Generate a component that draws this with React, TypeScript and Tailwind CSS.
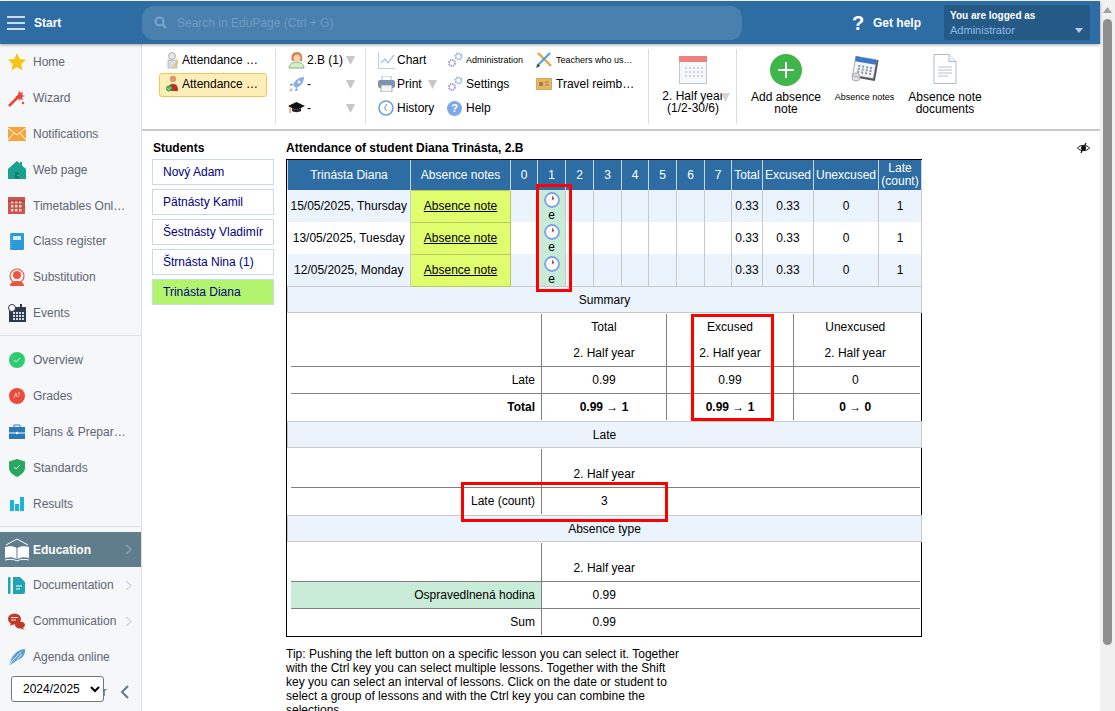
import React from "react";

const S = ({ w = 16, h = 16, vb = "0 0 16 16", children }: { w?: number; h?: number; vb?: string; children: React.ReactNode }) => (
  <svg width={w} height={h} viewBox={vb} className="shrink-0">{children}</svg>
);

const Tri = ({ c = "#c6c6c6" }: { c?: string }) => (
  <svg width="9" height="9" viewBox="0 0 9 9" className="shrink-0"><polygon points="0,0 9,0 4.5,9" fill={c} /></svg>
);

/* ---------- sidebar icons ---------- */
const side: Record<string, React.ReactNode> = {
  home: <S w={18} h={18} vb="0 0 18 18"><polygon points="9,0 11.6,6 18,6.7 13.2,11 14.6,17.5 9,14.1 3.4,17.5 4.8,11 0,6.7 6.4,6" fill="#f5c415" /></S>,
  wizard: <S w={18} h={18} vb="0 0 18 18"><path d="M1 17 L11 7" stroke="#e8453c" strokeWidth="2.6" /><path d="M11 1l1 3 3-1-1 3 3 1-3 1 1 3-3-1-1 2-1-3-3-1 3-2z" fill="#e8453c" /><circle cx="15" cy="14" r="1.2" fill="#e8453c" /></S>,
  notif: <S w={18} h={14} vb="0 0 18 14"><rect width="18" height="14" fill="#f7a43a" /><path d="M0 1l9 7 9-7M0 13l6-7M18 13l-6-7" stroke="#fff" strokeWidth="1" fill="none" /></S>,
  web: <S w={18} h={18} vb="0 0 18 18"><path d="M9 0l9 8v10H0V8z M12 1h2v4l-2-2z" fill="#19a08e" /><rect x="7" y="11" width="4" height="7" fill="#0d7f70" /><circle cx="10" cy="14.5" r=".5" fill="#fff" /></S>,
  tt: <S w={17} h={17} vb="0 0 17 17"><rect x="0" y="0" width="17" height="17" fill="#c9554f" />{[3, 7, 11].map((y) => [3, 7, 11].map((x) => <rect key={`${x}${y}`} x={x} y={y + 1} width="2.4" height="2.4" fill="#f4d9d6" />))}<path d="M0 4h17" stroke="#a83a35" /></S>,
  reg: <S w={14} h={17} vb="0 0 14 17"><rect width="14" height="17" rx="1" fill="#2b9ad8" /><rect x="3" y="3" width="8" height="4" fill="#d8eef9" /><path d="M1 0v17" stroke="#7cc4ea" strokeWidth="1" strokeDasharray="1 1" /></S>,
  sub: <S w={18} h={18} vb="0 0 18 18"><circle cx="9" cy="8" r="7" fill="none" stroke="#ee5340" strokeWidth="1.2" /><circle cx="9" cy="7" r="4" fill="#ee5340" /><path d="M2 18c0-4 4-5 7-5s7 1 7 5z" fill="#ee5340" /></S>,
  events: <S w={18} h={18} vb="0 0 18 18"><rect x="1" y="3" width="17" height="15" fill="#2c3a4b" /><circle cx="4" cy="4" r="3.5" fill="#fff" stroke="#2c3a4b" /><rect x="12" y="0" width="2" height="4" fill="#2c3a4b" />{[8, 11, 14].map((y) => [5, 8, 11, 14].map((x) => <rect key={`${x}${y}`} x={x} y={y} width="2" height="2" fill="#d5dbe2" />))}</S>,
  over: <S w={16} h={16}><circle cx="8" cy="8" r="8" fill="#2ecc71" /><path d="M5 8l2 2 4-4" stroke="#fff" fill="none" /></S>,
  grades: <S w={16} h={16}><circle cx="8" cy="8" r="8" fill="#eb4a3c" /><path d="M5 10l2-5 1 4 3-3M9 5h2" stroke="#f9c9c4" strokeWidth=".9" fill="none" /></S>,
  plans: <S w={16} h={15} vb="0 0 16 15"><path d="M5 3V1h6v2" fill="none" stroke="#2b7ab8" /><rect y="3" width="16" height="12" fill="#2b7ab8" /><path d="M0 9h16" stroke="#fff" /><circle cx="8" cy="9" r="1.2" fill="#fff" /></S>,
  std: <S w={16} h={18} vb="0 0 16 18"><path d="M8 0l8 2.5V9c0 4-4 7-8 9-4-2-8-5-8-9V2.5z" fill="#27a85f" /><path d="M5 8l2 2 4-4" stroke="#fff" fill="none" /></S>,
  res: <S w={14} h={14} vb="0 0 14 14"><rect x="0" y="3" width="4" height="11" fill="#18b6d6" /><rect x="5" y="7" width="4" height="7" fill="#18b6d6" /><rect x="10" y="0" width="4" height="14" fill="#18b6d6" /></S>,
  edu: <S w={26} h={24} vb="0 0 26 24"><path d="M2 7L13 1l11 6" fill="none" stroke="#fff" /><path d="M1 9c4-1 9-1 11.5 1v11C9 19 5 19 1 20zM25 9c-4-1-9-1-11.5 1v11c3.500-2 7.500-2 11.500-1z" fill="#fff" /><path d="M1 22c4-1 9-1 12 1 3-2 8-2 12-1" stroke="#fff" fill="none" /></S>,
  doc: <S w={17} h={17} vb="0 0 17 17"><rect x="0" y="0" width="2.500" height="17" rx="1" fill="#1fa3b5" /><path d="M5 0h7l5 5v10a2 2 0 0 1-2 2H5z" fill="#1fa3b5" /><path d="M8 9h6M8 12h4" stroke="#fff" /></S>,
  comm: <S w={17} h={17} vb="0 0 17 17"><ellipse cx="6.500" cy="6" rx="6.500" ry="5.500" fill="#c0392b" /><path d="M3 4.500h7M3 7h5" stroke="#fff" strokeWidth=".9" /><ellipse cx="12" cy="12" rx="5" ry="3.500" fill="#c0392b" /><path d="M3 10l-1 3 4-2M14 14l3 3-5-2" fill="#c0392b" /></S>,
  agenda: <S w={18} h={18} vb="0 0 18 18"><path d="M1 18l2-6C5 6 11 1 17 1c1 5-3 10-9 12z" fill="#5a9fd8" /><path d="M5 12l8-8M1 18l4-6M9 12l5-6" stroke="#f5f7f9" strokeWidth=".9" /></S>,
  gear: <S w={14} h={14} vb="0 0 14 14"><circle cx="7" cy="7" r="5" fill="none" stroke="#c9ccd0" strokeWidth="3" strokeDasharray="2 1" /></S>,
};

const Item = ({ icon, label, chev, active }: { icon: string; label: string; chev?: boolean; active?: boolean }) => (
  <div className={`flex h-9 items-center ${active ? "bg-[#607d8b] font-bold text-white" : "text-[#5e6674]"}`}>
    <div className="flex w-[33px] shrink-0 justify-center">{side[icon]}</div>
    <span className="whitespace-nowrap">{label}</span>
    {chev && (
      <svg width="7" height="11" viewBox="0 0 7 11" className="ml-auto mr-[9px]">
        <path d="M1 1l5 4.500-5 4.500" fill="none" stroke={active ? "#8ea6b1" : "#d4d7da"} strokeWidth="1.300" />
      </svg>
    )}
  </div>
);

const Sidebar = () => (
  <aside className="relative flex h-full w-[142px] shrink-0 flex-col border-r border-[#dcdfe3] bg-[#f5f7f9]">
    <Item icon="home" label="Home" />
    <Item icon="wizard" label="Wizard" />
    <Item icon="notif" label="Notifications" />
    <Item icon="web" label="Web page" />
    <Item icon="tt" label="Timetables Onl…" />
    <Item icon="reg" label="Class register" />
    <Item icon="sub" label="Substitution" />
    <Item icon="events" label="Events" />
    <div className="mb-[6px] mt-1 border-b border-[#dfe2e5]" />
    <Item icon="over" label="Overview" />
    <Item icon="grades" label="Grades" />
    <Item icon="plans" label="Plans & Prepar…" />
    <Item icon="std" label="Standards" />
    <Item icon="res" label="Results" />
    <div className="mb-[5px] mt-1 border-b border-[#dfe2e5]" />
    <Item icon="edu" label="Education" chev active />
    <Item icon="doc" label="Documentation" chev />
    <Item icon="comm" label="Communication" chev />
    <Item icon="agenda" label="Agenda online" />
    <div className="flex h-9 items-center pb-[2px] text-[#5e6674]">
      <div className="flex w-[33px] shrink-0 justify-center">{side.gear}</div>
      <span className="ml-[3px] whitespace-nowrap">Administrator</span>
      <svg width="10" height="14" viewBox="0 0 10 14" className="ml-auto mr-[11px]">
        <path d="M8 1L2 7l6 6" fill="none" stroke="#607d8b" strokeWidth="2" />
      </svg>
    </div>
    <select
      defaultValue="2024/2025"
      className="absolute left-[11px] top-[632px] h-[26px] w-[93px] rounded-[3px] border border-[#767676] bg-white pl-[7px] text-[12px] text-black"
    >
      <option>2024/2025</option>
    </select>
  </aside>
);

/* ---------- toolbar icons ---------- */
const PersonPaper = () => (
  <S w={16} h={17} vb="0 0 16 17"><circle cx="7" cy="4" r="3.500" fill="#e6e6e6" stroke="#999" strokeWidth=".7" /><rect x="3" y="8" width="9" height="8" fill="#dcdcdc" stroke="#aaa" strokeWidth=".7" /><path d="M9 15l4-6" stroke="#e8c14a" strokeWidth="1.500" /></S>
);
const PersonRed = () => (
  <S w={16} h={17} vb="0 0 16 17"><circle cx="8" cy="4" r="3.200" fill="#d79b6c" /><path d="M3 16c0-6 2-7 5-7s5 1 5 7z" fill="#b8322a" /><circle cx="4" cy="13.500" r="3" fill="#4ca64c" /><path d="M2.500 13.500l1 1 2-2" stroke="#fff" fill="none" strokeWidth=".8" /></S>
);
const Student = () => (
  <S w={17} h={18} vb="0 0 17 18"><path d="M4 10C2 4 5 1 9 1s6 3 5 9z" fill="#d9824f" /><circle cx="9" cy="7" r="3.500" fill="#f6d3b5" /><path d="M1 17c0-4 4-6 7.500-6s7.500 2 7.500 6z" fill="#d6eccb" stroke="#62a55c" strokeWidth=".8" /></S>
);
const Rocket = () => (
  <S w={17} h={17} vb="0 0 17 17"><path d="M16 1c-5 0-9 3-11 8l3 3c5-2 8-6 8-11z" fill="#85aee8" /><path d="M5 9l-3 1 1-3zM8 12l-1 3 3-1z" fill="#5d8bd6" /><path d="M3 12l-2 4 4-2z" fill="#f0a3a0" /><circle cx="11" cy="6" r="1.500" fill="#fff" /></S>
);
const Cap = () => (
  <S w={17} h={14} vb="0 0 17 14"><polygon points="8.500,1 17,5 8.500,9 0,5" fill="#111" /><path d="M4 7v3c2 1.500 7 1.500 9 0V7l-4.500 2z" fill="#222" /><path d="M2 6v6" stroke="#d8a27a" strokeWidth="1.500" /></S>
);
const ChartI = () => (
  <S w={17} h={17} vb="0 0 17 17"><path d="M.5 0v16.500H17" fill="none" stroke="#b9d0e6" strokeWidth="1.200" /><path d="M3 11l4-4 3 4 6-8" fill="none" stroke="#a9c4df" strokeWidth="1.300" /></S>
);
const PrintI = () => (
  <S w={17} h={16} vb="0 0 17 16"><rect x="4" y="0" width="9" height="5" fill="#fff" stroke="#9ab" strokeWidth=".8" /><rect y="4" width="17" height="8" rx="2" fill="#7a94b0" /><rect x="3" y="9" width="11" height="7" fill="#f3f3f3" stroke="#8a9bb0" strokeWidth=".8" /></S>
);
const ClockBig = () => (
  <S w={16} h={16}><circle cx="8" cy="8" r="7" fill="#fff" stroke="#6f9fdc" strokeWidth="1.600" /><path d="M9 4L6.500 8 9 11" fill="none" stroke="#6f8fb8" /></S>
);
const Gears = () => (
  <S w={16} h={16}>
    <circle cx="5" cy="11" r="3" fill="none" stroke="#a995cf" strokeWidth="2" strokeDasharray="1.500 .8" />
    <circle cx="11.500" cy="4.500" r="3" fill="none" stroke="#8fb2d6" strokeWidth="2" strokeDasharray="1.500 .8" />
  </S>
);
const HelpI = () => (
  <div className="flex h-[15px] w-[15px] shrink-0 items-center justify-center rounded-full bg-[#7da9e8] text-[11px] font-bold text-white">?</div>
);
const Pencils = () => (
  <S w={16} h={16}><path d="M2 1l13 13" stroke="#e8a33c" strokeWidth="2.400" /><path d="M14 1L1 14" stroke="#5aa5dc" strokeWidth="2.400" /><path d="M0 16l2-4 2 2z" fill="#333" /></S>
);
const Travel = () => (
  <S w={16} h={12} vb="0 0 16 12"><rect width="16" height="12" rx="2.500" fill="#e2b768" stroke="#b98d3f" strokeWidth=".7" /><rect x="3" y="4" width="4" height="4" fill="#a97f37" /><path d="M9 4h4M9 7h4" stroke="#a97f37" /></S>
);

const TI = ({ icon, label, w, cls = "" }: { icon: React.ReactNode; label: string; w: number; cls?: string }) => (
  <div className={`flex h-5 items-center whitespace-nowrap ${cls}`}>
    <div className="flex shrink-0 items-center" style={{ width: w }}>{icon}</div>
    <span>{label}</span>
  </div>
);

const Toolbar = () => (
  <div className="flex h-[87px] shrink-0 border-b-2 border-[#c9c9c9] pt-[5px] text-black">
    <div className="flex h-[75px] w-[134px] flex-col border-r border-[#dddddd] pl-[17px]">
      <div className="mt-px flex h-5 w-[108px] items-center whitespace-nowrap pl-[5px]">
        <div className="flex w-[18px] justify-center"><PersonPaper /></div>
        <span>Attendance …</span>
      </div>
      <div className="mt-[3px] flex h-6 w-[108px] items-center whitespace-nowrap rounded-[3px] border border-[#f3c653] bg-[#fdeeb8] pb-[3px] pl-[4px]">
        <div className="flex w-[18px] justify-center"><PersonRed /></div>
        <span>Attendance …</span>
      </div>
    </div>
    <div className="flex h-[75px] w-[90px] flex-col gap-1 border-r border-[#dddddd] pl-[12px] pt-px">
      <div className="flex h-5 w-[67px] items-center"><div className="w-[19px]"><Student /></div><span>2.B (1)</span><div className="ml-auto"><Tri /></div></div>
      <div className="flex h-5 w-[67px] items-center"><div className="w-[19px]"><Rocket /></div><span>-</span><div className="ml-auto"><Tri /></div></div>
      <div className="flex h-5 w-[67px] items-center"><div className="w-[19px]"><Cap /></div><span>-</span><div className="ml-auto"><Tri /></div></div>
    </div>
    <div className="flex h-[75px] w-[283px] border-r border-[#dddddd] pl-[12px] pt-px">
      <div className="flex w-[69px] flex-col gap-1">
        <TI icon={<ChartI />} label="Chart" w={19} />
        <div className="flex h-5 items-center"><TI icon={<PrintI />} label="Print" w={19} /><div className="ml-[6px]"><Tri /></div></div>
        <TI icon={<ClockBig />} label="History" w={19} />
      </div>
      <div className="flex w-[89px] flex-col gap-1">
        <TI icon={<Gears />} label="Administration" w={19} cls="text-[9px]" />
        <TI icon={<Gears />} label="Settings" w={19} />
        <TI icon={<HelpI />} label="Help" w={19} />
      </div>
      <div className="flex flex-col gap-1">
        <TI icon={<Pencils />} label="Teachers who us…" w={20} cls="text-[9px]" />
        <TI icon={<Travel />} label="Travel reimb…" w={20} />
      </div>
    </div>
    <div className="relative flex h-[75px] w-[88px] flex-col items-center border-r border-[#dddddd] pl-px pt-[7px]">
      <S w={28} h={28} vb="0 0 28 28">
        <rect x=".5" y=".5" width="27" height="27" fill="#f6f8fa" stroke="#b8c8d8" />
        <rect width="28" height="6" fill="#ee8080" />
        {[11, 15, 19].map((y) => [6, 10, 14, 18, 22].map((x) => <rect key={`${x}${y}`} x={x} y={y} width="2" height="2" fill="#c9d6e2" />))}
      </S>
      <div className="mt-[6px] text-center leading-[12px]">2. Half year<br />(1/2-30/6)</div>
      <div className="absolute left-[72px] top-[44px]"><Tri c="#d4d4d4" /></div>
    </div>
    <div className="flex h-[75px] pl-[9px] text-center leading-[12px]">
      <div className="flex w-20 flex-col items-center pt-[5px]">
        <div className="flex h-8 w-8 items-center justify-center rounded-full bg-[#3fb649]">
          <svg width="18" height="18" viewBox="0 0 18 18"><path d="M9 1v16M1 9h16" stroke="#fff" strokeWidth="2" /></svg>
        </div>
        <div className="mt-[5px]">Add absence<br />note</div>
      </div>
      <div className="flex w-[77px] flex-col items-center pt-[5px]">
        <div className="h-8">
          <S w={28} h={30} vb="0 0 28 30">
            <rect x="3" y="4" width="23" height="21" fill="#555" transform="rotate(10 14 14)" />
            <rect x="3" y="4" width="21" height="19" fill="#f3f5f8" stroke="#889" strokeWidth=".5" transform="rotate(10 14 14)" />
            <rect x="3" y="4" width="21" height="5" fill="#3d78c2" transform="rotate(10 14 14)" />
            {[12, 15, 18].map((y) => [7, 11, 15, 19].map((x) => <rect key={`${x}${y}`} x={x} y={y} width="2" height="2" fill="#8893a3" transform="rotate(10 14 14)" />))}
            <circle cx="5" cy="23" r="4" fill="#ddd" fillOpacity=".8" stroke="#aaa" />
          </S>
        </div>
        <div className="mt-[5px] whitespace-nowrap text-[9px]">Absence notes</div>
      </div>
      <div className="flex w-[84px] flex-col items-center pt-[5px]">
        <div className="h-8">
          <S w={24} h={30} vb="0 0 24 30">
            <path d="M1 .5h15l7 7v22H1z" fill="#fff" stroke="#a9bdd0" />
            <path d="M16 .5v7h7" fill="#eef2f6" stroke="#a9bdd0" />
            <path d="M5 13h14M5 16h14M5 19h14M5 22h10" stroke="#b9bfc6" />
          </S>
        </div>
        <div className="mt-[5px]">Absence note<br />documents</div>
      </div>
    </div>
  </div>
);

/* ---------- table ---------- */
const colW = [123, 100, 27, 28, 28, 28, 27, 28, 28, 27, 31, 51, 65, 43];
const heads = ["Trinásta Diana", "Absence notes", "0", "1", "2", "3", "4", "5", "6", "7", "Total", "Excused", "Unexcused"];
const rows = ["15/05/2025, Thursday", "13/05/2025, Tuesday", "12/05/2025, Monday"];

const LateClock = () => (
  <svg width="16" height="16" viewBox="0 0 16 16" className="mx-auto block">
    <circle cx="8" cy="8" r="7" fill="#fff" stroke="#7ea6dc" strokeWidth="1.800" />
    <path d="M8 8V3.500L10.500 7z" fill="#e0292a" />
  </svg>
);

const Band = ({ label }: { label: string }) => (
  <tr>
    <td colSpan={14} className="h-[26px] border border-[#c9c9c9] bg-[#ebf3fc] p-0 text-center align-middle">{label}</td>
  </tr>
);

const cL = "border-r border-[#808080] pr-[6px] text-right";
const line = "border-b border-[#808080]";

const Nested = ({ children, cols }: { children: React.ReactNode; cols: number[] }) => (
  <tr>
    <td colSpan={14} className="p-0 px-[3px]">
      <table className="my-px w-[629px] table-fixed border-collapse">
        <colgroup>{cols.map((c, i) => <col key={i} style={{ width: c }} />)}</colgroup>
        <tbody className="text-center">{children}</tbody>
      </table>
    </td>
  </tr>
);

const AttendanceTable = () => (
  <div className="relative w-[636px] border border-black">
    <table className="w-[634px] table-fixed border-collapse">
      <colgroup>{colW.map((c, i) => <col key={i} style={{ width: c }} />)}</colgroup>
      <tbody>
        <tr className="bg-[#2d6da3] text-center text-white">
          {heads.map((h) => (
            <td key={h} className="h-[30px] border-x border-[#c7d8e8] p-0">{h}</td>
          ))}
          <td className="border-x border-[#c7d8e8] p-0 leading-[13px]">Late<br />(count)</td>
        </tr>
        {rows.map((r, i) => (
          <tr key={r} className={`h-8 text-center ${i % 2 === 0 ? "bg-[#ebf3fc]" : "bg-white"}`}>
            <td className="whitespace-nowrap border-r border-[#c9c9c9] p-0">{r}</td>
            <td className="border border-[#b9c95e] bg-[#e0fd6e] p-0 underline">Absence note</td>
            <td className="border-x border-[#c9c9c9] p-0" />
            <td className="border-x border-[#c9c9c9] bg-[#c8ecd8] p-0 align-top leading-[14px]">
              <div className="pt-[2px]"><LateClock /></div>
              <div>e</div>
            </td>
            {[2, 3, 4, 5, 6, 7].map((n) => <td key={n} className="border-x border-[#c9c9c9] p-0" />)}
            <td className="border-x border-[#c9c9c9] p-0">0.33</td>
            <td className="border-x border-[#c9c9c9] p-0">0.33</td>
            <td className="border-x border-[#c9c9c9] p-0">0</td>
            <td className="border-x border-[#c9c9c9] p-0">1</td>
          </tr>
        ))}
        <Band label="Summary" />
        <Nested cols={[251, 125, 127, 126]}>
          <tr className="h-[26px]"><td className={cL} /><td className="border-r border-[#808080]">Total</td><td className="border-r border-[#808080]">Excused</td><td className="pr-[3px]">Unexcused</td></tr>
          <tr className={`h-[26px] ${line}`}><td className={cL} /><td className="border-r border-[#808080]">2. Half year</td><td className="border-r border-[#808080]">2. Half year</td><td className="pr-[3px]">2. Half year</td></tr>
          <tr className={`h-[27px] ${line}`}><td className={cL}>Late</td><td className="border-r border-[#808080]">0.99</td><td className="border-r border-[#808080]">0.99</td><td className="pr-[3px]">0</td></tr>
          <tr className="h-[27px] font-bold"><td className={cL}>Total</td><td className="border-r border-[#808080]">0.99 → 1</td><td className="border-r border-[#808080]">0.99 → 1</td><td className="pr-[3px]">0 → 0</td></tr>
        </Nested>
        <Band label="Late" />
        <Nested cols={[251, 125, 253]}>
          <tr className={`h-[38px] ${line}`}><td className={cL} /><td className="pt-[12px]">2. Half year</td><td /></tr>
          <tr className="h-[27px]"><td className={cL}>Late (count)</td><td>3</td><td /></tr>
        </Nested>
        <Band label="Absence type" />
        <Nested cols={[251, 125, 253]}>
          <tr className={`h-[38px] ${line}`}><td className={cL} /><td className="pt-[12px]">2. Half year</td><td /></tr>
          <tr className={`h-[27px] ${line}`}><td className={`${cL} bg-[#c8ecd8]`}>Ospravedlnená hodina</td><td>0.99</td><td /></tr>
          <tr className="h-[27px]"><td className={cL}>Sum</td><td>0.99</td><td /></tr>
        </Nested>
      </tbody>
    </table>
    <div className="absolute left-[249px] top-[24px] h-[108px] w-[36px] border-[3px] border-[#ff0000]" />
    <div className="absolute left-[404px] top-[154px] h-[107px] w-[83px] border-[3px] border-[#ff0000]" />
    <div className="absolute left-[174px] top-[322px] h-[40px] w-[207px] border-[3px] border-[#ff0000]" />
  </div>
);

const students = ["Nový Adam", "Pätnásty Kamil", "Šestnásty Vladimír", "Štrnásta Nina (1)", "Trinásta Diana"];

export default function App() {
  return (
    <div className="flex h-[711px] w-[1115px] overflow-hidden bg-white text-[12px] leading-[14px] text-black [font-family:'Liberation_Sans',Arial,sans-serif]">
      <div className="flex min-w-0 flex-1 flex-col pt-px">
        <header className="z-10 flex h-[43px] shrink-0 items-center bg-[#2d6da3] shadow-[0_1px_3px_rgba(0,0,0,0.35)]">
          <svg width="18" height="14" viewBox="0 0 18 14" className="ml-[7px] shrink-0">
            <path d="M0 1h18M0 7h18M0 13h18" stroke="#fff" strokeWidth="1.700" />
          </svg>
          <span className="ml-[9px] w-[108px] font-bold text-white">Start</span>
          <div className="flex h-[34px] w-[600px] items-center rounded-[12px] bg-[#4a80ae] pl-3 text-[#6f9cc4]">
            <svg width="13" height="13" viewBox="0 0 13 13" className="shrink-0">
              <circle cx="5.500" cy="5.500" r="4" fill="none" stroke="#7fa7cb" strokeWidth="2" />
              <path d="M8.500 8.500L12 12" stroke="#7fa7cb" strokeWidth="2.200" />
            </svg>
            <span className="ml-[10px]">Search in EduPage (Ctrl + G)</span>
          </div>
          <span className="ml-[110px] w-[21px] text-[20px] font-bold leading-none text-white">?</span>
          <span className="font-bold text-white">Get help</span>
          <div className="ml-[23px] flex h-[35px] w-[146px] flex-col justify-center rounded-[2px] bg-[#255a87] pl-[6px] pr-[7px] pt-px">
            <span className="text-[10px] font-bold leading-[14px] text-white">You are logged as</span>
            <div className="flex items-center justify-between">
              <span className="text-[11px] leading-[15px] text-[#8fbbe8]">Administrator</span>
              <svg width="8" height="5" viewBox="0 0 8 5"><polygon points="0,0 8,0 4,5" fill="#b7cde0" /></svg>
            </div>
          </div>
        </header>
        <div className="flex min-h-0 flex-1">
          <Sidebar />
          <main className="flex min-w-0 flex-1 flex-col">
            <Toolbar />
            <div className="flex pl-[10px] pt-[10px]">
              <div className="w-[122px] shrink-0">
                <h2 className="mb-[4px] pl-px font-bold">Students</h2>
                <div className="flex flex-col gap-1">
                  {students.map((s, i) => (
                    <div key={s} className={`flex h-[26px] items-center border border-[#c9d9ea] pl-[10px] text-[#000080] ${i === 4 ? "bg-[#b3f46f]" : "bg-white"}`}>{s}</div>
                  ))}
                </div>
              </div>
              <div className="ml-3 w-[806px]">
                <div className="mb-[4px] flex items-center justify-between">
                  <h2 className="font-bold">Attendance of student Diana Trinásta, 2.B</h2>
                  <svg width="13" height="10" viewBox="0 0 13 10" className="mr-[2px]">
                    <path d="M.5 5C3 1.500 10 1.500 12.500 5 10 8.500 3 8.500 .5 5z" fill="#fff" stroke="#111" />
                    <circle cx="6.500" cy="5" r="2.500" fill="#111" />
                    <path d="M9 0L4 10" stroke="#111" strokeWidth="1.200" />
                  </svg>
                </div>
                <AttendanceTable />
                <p className="mt-[10px] w-[398px]">
                  Tip: Pushing the left button on a specific lesson you can select it. Together with the Ctrl key you can select multiple lessons. Together with the Shift key you can select an interval of lessons. Click on the date or student to select a group of lessons and with the Ctrl key you can combine the selections.
                </p>
              </div>
            </div>
          </main>
        </div>
      </div>
      <div className="flex w-[15px] shrink-0 flex-col items-center bg-[#f1f1f1]">
        <svg width="9" height="6" viewBox="0 0 9 6" className="mt-[7px]"><polygon points="4.500,0 9,6 0,6" fill="#a3a3a3" /></svg>
        <div className="mt-[6px] h-[626px] w-[9px] rounded-[5px] bg-[#8f8f8f]" />
      </div>
    </div>
  );
}
